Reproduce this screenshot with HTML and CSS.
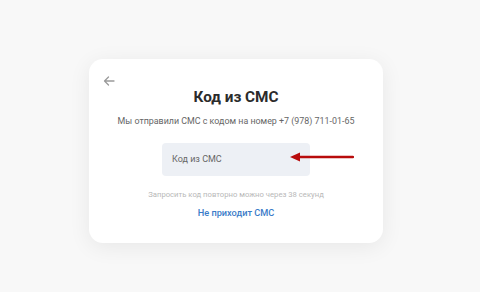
FILE: index.html
```html
<!DOCTYPE html>
<html lang="ru">
<head>
<meta charset="utf-8">
<link rel="stylesheet" href="styles.css">
</head>
<body>
<div class="page">
  <div class="card">
    <div class="back">
      <svg width="12" height="10" viewBox="0 0 12 10"><path d="M11 5H1.5M5.5 1L1.5 5l4 4" fill="none" stroke="#9a9a9a" stroke-width="1.3" stroke-linecap="round" stroke-linejoin="round"/></svg>
    </div>
    <h1 class="title">Код из СМС</h1>
    <p class="subtitle">Мы отправили СМС с кодом на номер +7 (978) 711-01-65</p>
    <div class="field-wrap">
      <div class="field">Код из СМС</div>
      <svg class="pointer" width="64" height="10" viewBox="0 0 64 10"><path d="M9 5H63" stroke="#b80c0c" stroke-width="2.4" stroke-linecap="round"/><path d="M0 5L10 0.5V9.5Z" fill="#b80c0c"/></svg>
    </div>
    <p class="hint">Запросить код повторно можно через 38 секунд</p>
    <a class="link">Не приходит СМС</a>
  </div>
</div>
</body>
</html>
```

FILE: styles.css
```css
* { box-sizing: border-box; }
html, body { margin: 0; padding: 0; }
body {
  width: 480px;
  height: 292px;
  overflow: hidden;
  background: #f8f8f8;
  font-family: Roboto, "Noto Sans", sans-serif;
}
.page {
  padding: 59px 0 0 89px;
}
.card {
  width: 294px;
  height: 184px;
  background: #ffffff;
  border-radius: 14px;
  box-shadow: 0 4px 22px rgba(0, 0, 0, 0.07);
  display: flex;
  flex-direction: column;
  align-items: center;
  padding: 17px 14px 0;
}
.back {
  align-self: flex-start;
  height: 10px;
  line-height: 0;
}
.title {
  margin: 1px 0 0;
  font-size: 15.3px;
  font-weight: 700;
  color: #2b2b2b;
  line-height: 20px;
}
.subtitle {
  margin: 8px 0 0;
  font-size: 8.9px;
  line-height: 12px;
  color: #666;
}
.field-wrap {
  position: relative;
  margin-top: 16px;
}
.field {
  width: 148px;
  height: 33px;
  background: #edf0f5;
  border-radius: 4px;
  font-size: 9px;
  color: #666;
  padding: 10px 10px 0;
  line-height: 12px;
}
.pointer {
  position: absolute;
  left: 128px;
  top: 9px;
}
.hint {
  margin: 14px 0 0;
  font-size: 7.7px;
  line-height: 10px;
  color: #b8b8b8;
}
.link {
  margin-top: 7px;
  font-size: 9.2px;
  line-height: 12px;
  font-weight: 500;
  color: #3a7bc8;
}
```
